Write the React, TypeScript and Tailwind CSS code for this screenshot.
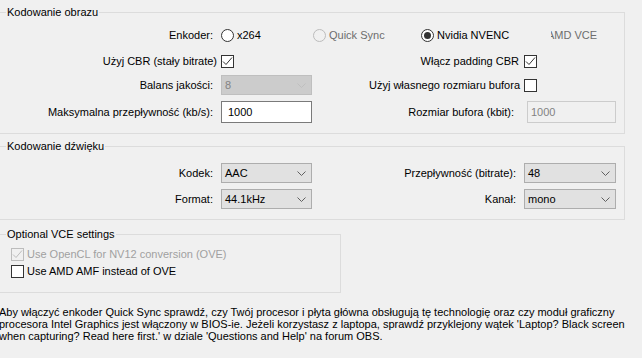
import React from 'react';

const Chevron = ({ color = '#606060' }: { color?: string }) => (
  <svg width="9" height="5" viewBox="0 0 9 5" className="shrink-0">
    <path d="M0.5 0.5 L4.5 4.5 L8.5 0.5" fill="none" stroke={color} strokeWidth="1" />
  </svg>
);

const CheckBox = ({ checked, disabled }: { checked?: boolean; disabled?: boolean }) => (
  <div
    className={`w-[13px] h-[13px] shrink-0 border flex items-center justify-center ${
      disabled ? 'border-[#bcbcbc] bg-[#f0f0f0]' : 'border-[#333333] bg-white'
    }`}
  >
    {checked && (
      <svg width="11" height="11" viewBox="0 0 11 11">
        <path d="M1 5.5 L4 8.5 L10 1.5" fill="none" stroke={disabled ? '#bcbcbc' : '#333333'} strokeWidth="1" />
      </svg>
    )}
  </div>
);

const Radio = ({ checked, disabled }: { checked?: boolean; disabled?: boolean }) => (
  <div
    className={`w-[13px] h-[13px] shrink-0 rounded-full border flex items-center justify-center ${
      disabled ? 'border-[#bcbcbc] bg-[#f0f0f0]' : 'border-[#333333] bg-white'
    }`}
  >
    {checked && <div className="w-[7px] h-[7px] rounded-full bg-[#333333]" />}
  </div>
);

const Combo = ({ value, disabled, w = 'w-[91px]' }: { value: string; disabled?: boolean; w?: string }) => (
  <div
    className={`${w} h-[20px] shrink-0 border flex items-center justify-between pl-[3px] pr-[5px] ${
      disabled ? 'bg-[#cccccc] border-[#bfbfbf] text-[#838383]' : 'bg-[#e1e1e1] border-[#adadad]'
    }`}
  >
    <span>{value}</span>
    <Chevron color={disabled ? '#bfbfbf' : '#606060'} />
  </div>
);

const Group = ({ title, className, children }: { title: string; className: string; children: React.ReactNode }) => (
  <div className={`relative border border-[#dcdcdc] ${className}`}>
    <span className="absolute left-[6px] top-[-7px] px-[1px] bg-[#f0f0f0] leading-[13px]">{title}</span>
    {children}
  </div>
);

const App: React.FC = () => {
  return (
    <div className="w-[642px] h-[358px] overflow-hidden bg-[#f0f0f0] text-black text-[11px] leading-[13px] font-['Liberation_Sans',Arial,sans-serif]">
      <div className="-ml-px w-[626px]">
        {/* Kodowanie obrazu */}
        <Group title="Kodowanie obrazu" className="mt-[12px] h-[122px]">
          <div className="flex flex-col pt-[12px]">
            <div className="flex items-center h-[20px]">
              <span className="w-[213px] text-right">Enkoder:</span>
              <div className="ml-[8px] w-[92px] flex items-center">
                <Radio />
                <span className="ml-[3px]">x264</span>
              </div>
              <div className="w-[108px] flex items-center">
                <Radio disabled />
                <span className="ml-[3px] text-[#6d6d6d]">Quick Sync</span>
              </div>
              <div className="w-[130px] flex items-center">
                <Radio checked />
                <span className="ml-[3px]">Nvidia NVENC</span>
              </div>
              <div className="w-[50px] overflow-hidden whitespace-nowrap">
                <span className="block -ml-[4px] text-[#6d6d6d]">AMD VCE</span>
              </div>
            </div>

            <div className="flex items-center h-[20px] mt-[6px]">
              <span className="w-[217px] text-right">Użyj CBR (stały bitrate)</span>
              <div className="ml-[4px]">
                <CheckBox checked />
              </div>
              <span className="w-[285px] text-right">Włącz padding CBR</span>
              <div className="ml-[5px]">
                <CheckBox checked />
              </div>
            </div>

            <div className="flex items-center h-[20px] mt-[4px]">
              <span className="w-[213px] text-right">Balans jakości:</span>
              <div className="ml-[8px]">
                <Combo value="8" disabled />
              </div>
              <span className="w-[208px] text-right">Użyj własnego rozmiaru bufora</span>
              <div className="ml-[4px]">
                <CheckBox />
              </div>
            </div>

            <div className="flex items-center h-[22px] mt-[6px]">
              <span className="w-[213px] text-right">Maksymalna przepływność (kb/s):</span>
              <div className="ml-[8px] w-[91px] h-[22px] border border-[#7a7a7a] bg-white flex items-center pl-[6px]">
                1000
              </div>
              <span className="w-[202px] text-right">Rozmiar bufora (kbit):</span>
              <div className="ml-[13px] w-[89px] h-[22px] border border-[#cccccc] bg-[#f0f0f0] text-[#838383] flex items-center pl-[3px]">
                1000
              </div>
            </div>
          </div>
        </Group>

        {/* Kodowanie dźwięku */}
        <Group title="Kodowanie dźwięku" className="mt-[12px] h-[74px]">
          <div className="flex flex-col pt-[16px]">
            <div className="flex items-center h-[20px]">
              <span className="w-[213px] text-right">Kodek:</span>
              <div className="ml-[8px]">
                <Combo value="AAC" />
              </div>
              <span className="w-[204px] text-right">Przepływność (bitrate):</span>
              <div className="ml-[8px]">
                <Combo value="48" w="w-[92px]" />
              </div>
            </div>
            <div className="flex items-center h-[20px] mt-[6px]">
              <span className="w-[213px] text-right">Format:</span>
              <div className="ml-[8px]">
                <Combo value="44.1kHz" />
              </div>
              <span className="w-[204px] text-right">Kanał:</span>
              <div className="ml-[8px]">
                <Combo value="mono" w="w-[92px]" />
              </div>
            </div>
          </div>
        </Group>

        {/* Optional VCE settings */}
        <Group title="Optional VCE settings" className="mt-[14px] h-[59px] w-[342px]">
          <div className="flex flex-col pt-[13px] pl-[11px]">
            <div className="flex items-center h-[13px]">
              <CheckBox checked disabled />
              <span className="ml-[3px] text-[#a0a0a0]">Use OpenCL for NV12 conversion (OVE)</span>
            </div>
            <div className="flex items-center h-[13px] mt-[4px]">
              <CheckBox />
              <span className="ml-[3px]">Use AMD AMF instead of OVE</span>
            </div>
          </div>
        </Group>

        <p className="mt-[13px] leading-[12px] whitespace-nowrap">
          Aby włączyć enkoder Quick Sync sprawdź, czy Twój procesor i płyta główna obsługują tę technologię oraz czy moduł graficzny
          <br />
          procesora Intel Graphics jest włączony w BIOS-ie. Jeżeli korzystasz z laptopa, sprawdź przyklejony wątek 'Laptop? Black screen
          <br />
          when capturing? Read here first.' w dziale 'Questions and Help' na forum OBS.
        </p>
      </div>
    </div>
  );
};

export default App;
